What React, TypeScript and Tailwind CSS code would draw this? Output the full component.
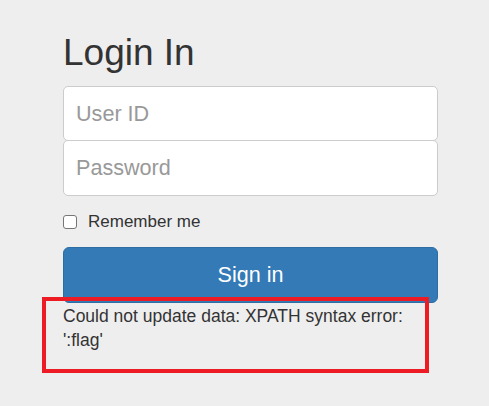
import React from "react";

export default function App() {
  const [remember, setRemember] = React.useState(false);

  return (
    <div className="relative h-[406px] w-[489px] overflow-hidden bg-[#eeeeee] font-['Liberation_Sans',Arial,sans-serif] text-[#333333]">
      <form
        className="flex flex-col pt-[32px] pl-[63px] pr-[51px]"
        onSubmit={(e) => e.preventDefault()}
      >
        <h2 className="mb-[13px] text-[37px] leading-[41px] font-normal">Login In</h2>

        <input
          type="text"
          placeholder="User ID"
          className="relative h-[55px] w-full rounded-[5px] border border-[#cccccc] bg-white px-[12px] text-[21.6px] outline-none placeholder:text-[#999999] focus:z-10"
        />
        <input
          type="password"
          placeholder="Password"
          className="relative -mt-px h-[56px] w-full rounded-[5px] border border-[#cccccc] bg-white px-[12px] text-[21.6px] outline-none placeholder:text-[#999999] focus:z-10"
        />

        <label className="mt-[14px] flex h-[24px] items-center gap-[11px] text-[17px] leading-[24px]">
          <input
            type="checkbox"
            checked={remember}
            onChange={(e) => setRemember(e.target.checked)}
            className="h-[14px] w-[14px] appearance-none rounded-[3px] border border-[#767676] bg-white checked:bg-[#337ab7]"
          />
          Remember me
        </label>

        <button
          type="submit"
          className="mt-[13px] h-[56px] w-full rounded-[6px] border border-[#2e6da4] bg-[#337ab7] text-[21.6px] text-white"
        >
          Sign in
        </button>

        <p className="mt-[1px] text-[17.5px] leading-[24px]">
          Could not update data: XPATH syntax error:
          <br />
          ':flag'
        </p>
      </form>

      {/* annotation box round the error */}
      <div className="pointer-events-none absolute top-[297px] left-[42px] h-[76px] w-[387px] border-[4.5px] border-[#ed1c24]" />
    </div>
  );
}
